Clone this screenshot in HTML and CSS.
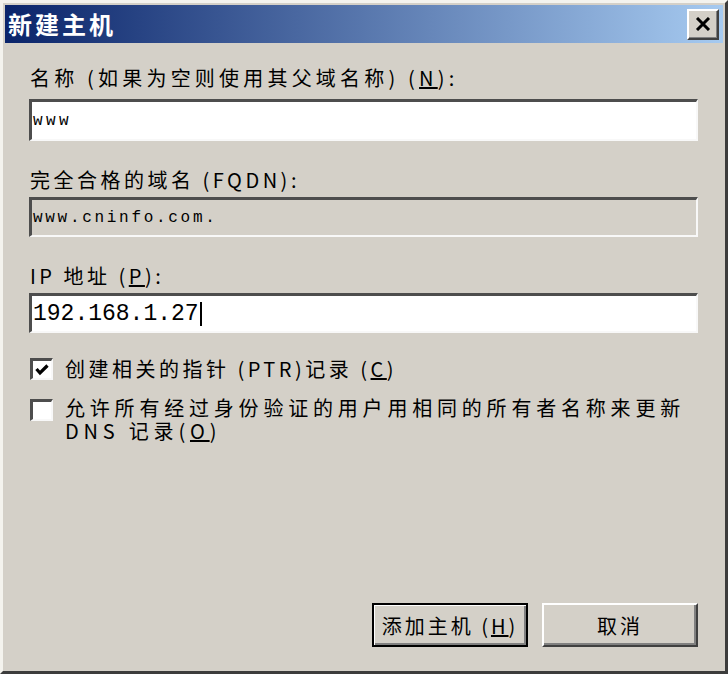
FILE: index.html
```html
<!DOCTYPE html>
<html lang="zh-CN">
<head>
    <meta charset="UTF-8">
    <title>新建主机</title>
    <link rel="stylesheet" href="styles.css">
</head>
<body>
    <div class="dialog">
        <div class="titlebar">
            <span class="title">新建主机</span>
            <button class="close-btn" aria-label="关闭">
                <svg width="16" height="14" viewBox="0 0 16 14">
                    <path d="M2 1 L14 13 M14 1 L2 13" stroke="#000" stroke-width="3" fill="none"/>
                </svg>
            </button>
        </div>
        <div class="body">
            <label class="field-label first">名称 (如果为空则使用其父域名称) (<u>N</u>):</label>
            <div class="textbox">www</div>

            <label class="field-label">完全合格的域名 (FQDN):</label>
            <div class="textbox readonly">www.cninfo.com.</div>

            <label class="field-label">IP 地址 (<u>P</u>):</label>
            <div class="textbox ip">192.168.1.27<span class="caret"></span></div>

            <div class="check-row">
                <span class="checkbox">
                    <svg width="14" height="12" viewBox="0 0 14 12">
                        <path d="M1.5 5 L5 9 L12.5 1.5" stroke="#000" stroke-width="3.2" fill="none"/>
                    </svg>
                </span>
                <span class="check-text">创建相关的指针 (PTR)记录 (<u>C</u>)</span>
            </div>
            <div class="check-row second">
                <span class="checkbox"></span>
                <span class="check-text">允许所有经过身份验证的用户用相同的所有者名称来更新<br>DNS 记录(<u>O</u>)</span>
            </div>

            <div class="buttons">
                <button class="btn default">添加主机 (<u>H</u>)</button>
                <button class="btn">取消</button>
            </div>
        </div>
    </div>
</body>
</html>
```

FILE: styles.css
```css
body {
    margin: 0;
    background-color: #d4d0c8;
    font-family: "Noto Sans CJK SC", sans-serif;
    color: #000;
}
.dialog {
    width: 728px;
    height: 674px;
    box-sizing: border-box;
    border: 3px solid;
    border-color: #f4f3ee #3c3c3c #3c3c3c #f4f3ee;
    padding: 2px;
    display: flex;
    flex-direction: column;
    background-color: #d4d0c8;
}
.titlebar {
    height: 38px;
    flex: none;
    display: flex;
    align-items: center;
    justify-content: space-between;
    padding: 0 4px 0 3px;
    background: linear-gradient(to right, #0a246a, #a6caf0);
}
.title {
    color: #fff;
    font-weight: bold;
    font-size: 24px;
    letter-spacing: 3px;
    line-height: 30px;
}
.close-btn {
    width: 32px;
    height: 31px;
    padding: 0;
    box-sizing: border-box;
    background-color: #d4d0c8;
    border: 2px solid;
    border-color: #fff #404040 #404040 #fff;
    box-shadow: inset -1px -1px #808080;
    display: flex;
    align-items: center;
    justify-content: center;
}
.body {
    flex: 1;
    display: flex;
    flex-direction: column;
    padding: 0 25px 22px 24px;
}
.field-label {
    font-size: 20px;
    line-height: 24px;
    letter-spacing: 3.5px;
    margin: 27px 0 5px 1px;
}
.field-label.first {
    margin-top: 23px;
    margin-bottom: 9px;
    letter-spacing: 4.2px;
}
.textbox {
    height: 42px;
    box-sizing: border-box;
    border-style: solid;
    border-width: 3px 2px 2px 3px;
    border-color: #4d4d4d #f8f8f8 #f8f8f8 #4d4d4d;
    background-color: #fff;
    font-family: "Liberation Mono", monospace;
    font-size: 16px;
    letter-spacing: 3.4px;
    padding-left: 1px;
    display: flex;
    align-items: center;
}
.textbox.readonly {
    height: 40px;
    background-color: #d4d0c8;
    letter-spacing: 2.7px;
    font-size: 16px;
}
.textbox.ip {
    height: 40px;
    font-size: 23px;
    letter-spacing: 0;
}
.caret {
    display: inline-block;
    width: 2px;
    height: 24px;
    background-color: #000;
    margin-left: 1px;
}
.check-row {
    display: flex;
    align-items: flex-start;
    margin-top: 24px;
}
.check-row.second {
    margin-top: 16px;
}
.checkbox {
    width: 23px;
    height: 22px;
    flex: none;
    box-sizing: border-box;
    border-style: solid;
    border-width: 3px 2px 2px 3px;
    border-color: #4d4d4d #f8f8f8 #f8f8f8 #4d4d4d;
    background-color: #fff;
    margin: 1px 12px 0 1px;
    display: flex;
    align-items: center;
    justify-content: center;
}
.check-text {
    font-size: 20px;
    line-height: 23px;
    letter-spacing: 3.5px;
}
.check-row.second .checkbox {
    margin-top: 3px;
}
.check-row.second .check-text {
    line-height: 23px;
    letter-spacing: 4.8px;
}
.buttons {
    margin-top: auto;
    display: flex;
    justify-content: flex-end;
    gap: 14px;
}
.btn {
    width: 156px;
    height: 44px;
    box-sizing: border-box;
    padding: 0;
    font-family: inherit;
    font-size: 20px;
    letter-spacing: 3px;
    color: #000;
    background-color: #d4d0c8;
    border: 2px solid;
    border-color: #fff #404040 #404040 #fff;
    box-shadow: inset -2px -2px #808080;
}
.btn.default {
    border-color: #000;
    box-shadow: inset 1px 1px #fff, inset -2px -2px #808080;
}
```
